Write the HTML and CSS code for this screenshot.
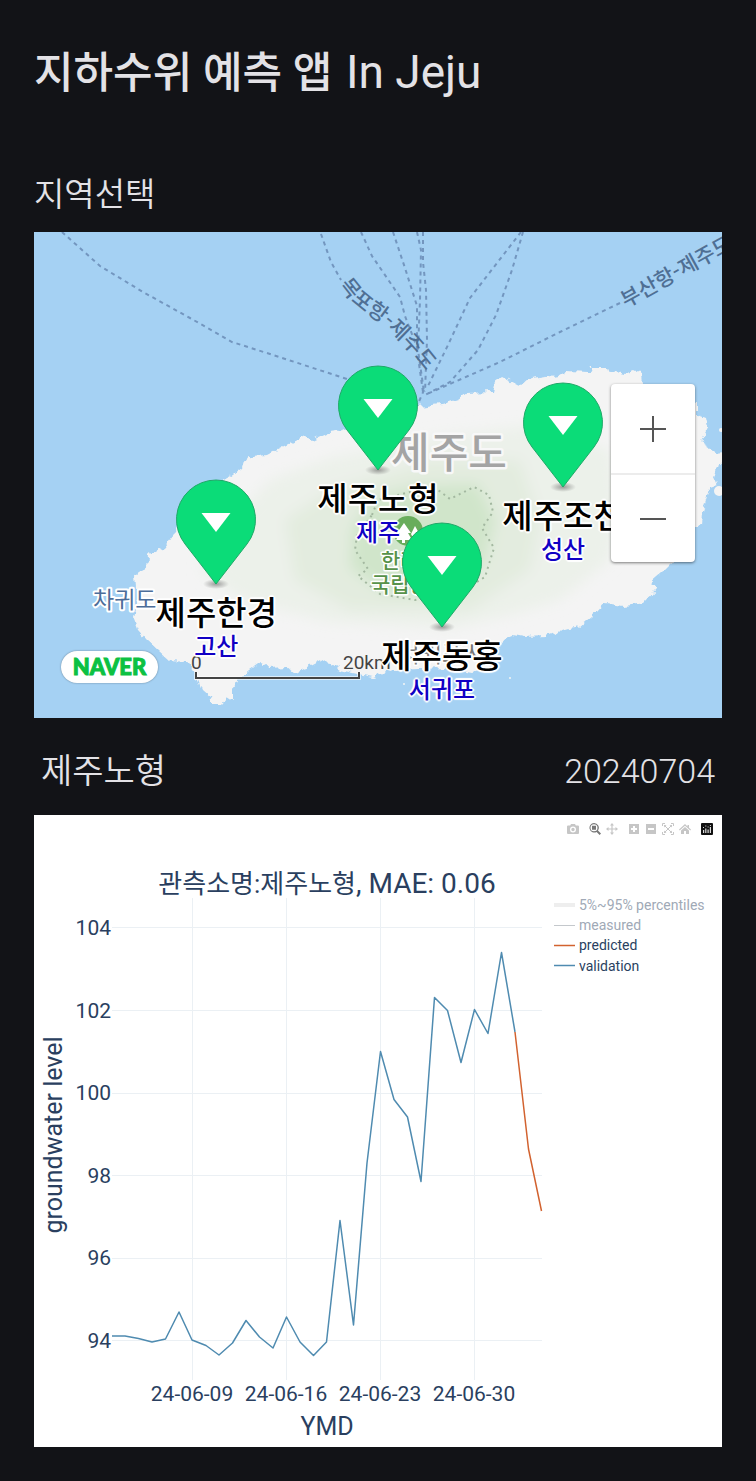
FILE: index.html
```html
<!DOCTYPE html>
<html lang="ko">
<head>
<meta charset="utf-8">
<meta name="viewport" content="width=device-width, initial-scale=1">
<title>지하수위 예측 앱 In Jeju</title>
<link rel="stylesheet" href="styles.css">
</head>
<body>
<svg class="defs" aria-hidden="true">
  <defs>
    <radialGradient id="pin-shade"><stop offset="0" stop-color="#555" stop-opacity=".55"/><stop offset="1" stop-color="#555" stop-opacity="0"/></radialGradient>
    <symbol id="pin" viewBox="-42 -41 84 116">
      <ellipse cx="0" cy="65" rx="13" ry="5" fill="url(#pin-shade)"/>
      <path d="M0 65 L-31 25 A39.500 39.500 0 1 1 31 25 Z" fill="#0bdc78" stroke="#1fa968" stroke-width="1"/>
      <path d="M-14.500 -6 H14.500 L0 13 Z" fill="#fff"/>
    </symbol>
  </defs>
</svg>
<main class="page">
  <h1 class="title"><span class="title-ko">지하수위 예측 앱 </span>In Jeju</h1>
  <h2 class="section-label">지역선택</h2>

  <section class="map" aria-label="제주도 지도">
    <svg class="map-canvas" viewBox="34 232 688 486">
      <defs>
        <filter id="coast" x="-5%" y="-5%" width="110%" height="110%">
          <feTurbulence type="fractalNoise" baseFrequency="0.13" numOctaves="2" seed="4" result="n"/>
          <feDisplacementMap in="SourceGraphic" in2="n" scale="9" xChannelSelector="R" yChannelSelector="G"/>
        </filter>
        <filter id="soft"><feGaussianBlur stdDeviation="7"/></filter>
        <path id="mokpo" d="M339 285 Q350 303 370 315 Q398 334 429 375"/>
      </defs>
      <rect x="34" y="232" width="688" height="486" fill="#a5d1f3"/>
      <path class="land" filter="url(#coast)" d="M247 455 L253 457 L267 455 L280 448 L305 436 L313 440 L330 432 L343 430 L370 417 L417 407 L427 406 L447 403 L457 400 L467 393 L493 392 L495 383 L503 377 L520 386 L527 380 L557 375 L567 372 L590 373 L593 367 L605 367 L608 370 L623 374 L635 370 L641 373 L642 383 L660 390 L697 403 L697 415 L705 418 L707 427 L700 442 L710 448 L717 453 L740 450 V462 L718 463 L714 478 L717 485 L711 487 L708 493 L702 513 L701 525 L692 528 L688 550 L672 563 L663 572 L650 583 L657 588 L643 603 L623 606 L605 603 L597 612 L587 620 L578 628 L563 630 L547 636 L523 637 L513 635 L503 639 L495 660 L490 668 L473 673 L447 668 L393 670 L373 677 L363 675 L340 670 L323 660 L310 667 L293 672 L287 667 L270 668 L260 663 L250 670 L238 680 L233 690 L233 701 L227 697 L222 703 L212 703 L210 697 L202 690 L195 673 L187 662 L170 661 L158 650 L147 640 L138 630 L133 617 L137 600 L135 575 L147 567 L148 555 L163 548 L175 533 L190 500 L230 477 L243 467 Z"/>
      <g filter="url(#soft)">
        <path fill="#ecf1ea" d="M232 520 L270 480 L330 458 L440 436 L535 425 L610 450 L618 500 L610 560 L560 600 L510 615 L450 628 L330 622 L240 600 L200 570 Z"/>
        <path fill="#e3ecdf" d="M285 520 L330 490 L430 460 L520 460 L540 520 L530 570 L470 610 L350 610 L295 580 Z"/>
        <path fill="#d0e5ca" d="M352 530 L372 498 L420 486 L478 484 L495 520 L485 560 L450 597 L385 592 L350 568 Z"/>
      </g>
      <path class="park-line" d="M372 515 L378 500 L410 492 L438 490 L450 499 L474 487 L489 495 L493 512 L482 528 L494 548 L485 577 L462 591 L415 600 L380 594 L358 576 L368 569 L355 550 L357 535 Z"/>
      <g class="isle"><circle cx="719" cy="491" r="5"/><circle cx="404" cy="684" r="1"/><circle cx="510" cy="678" r="1"/><circle cx="721" cy="430" r="2"/></g>
      <g class="routes">
        <path d="M62 232 L100 266 L143 292 L190 318 L232 342 L270 354 L350 380 L400 396"/>
        <path d="M321 234 L331 262 L341 280"/>
        <path d="M361 232 L372 256 L400 297 L405 316 L418 350 L424 392"/>
        <path d="M393 232 L405 268 L417 306 L417 350 L423 392"/>
        <path d="M417 232 L421 250 L420 300 L418 350"/>
        <path d="M423 232 L423 262 L426 290 L427 340 L425 392"/>
        <path d="M521 232 L470 298 L448 345 L427 388"/>
        <path d="M523 232 L512 270 L496 315 L478 350 L450 382 L425 395"/>
        <path d="M620 303 L560 332 L500 362 L427 394"/>
        <path d="M424 390 L417 406"/>
      </g>
      <g class="route-label">
        <text><textPath href="#mokpo">목포항-제주도</textPath></text>
        <text transform="translate(626 308) rotate(-29)">부산항-제주도</text>
      </g>
      <text class="island-label" x="391" y="468">제주도</text>
      <text class="sea-label" x="93" y="608">차귀도</text>
      <g>
        <circle cx="408" cy="531" r="15" fill="#69ad5c"/>
        <path d="M404 523 L411 533 H408 L412 540 H405 V543 H402 V540 H396 L400 533 H397 Z M415 526 L420 535 H418 L421 540 H414 L411 534 Z" fill="#fff"/>
      </g>
      <g class="park-label"><text x="381" y="568">한라산</text><text x="371" y="592">국립공원</text></g>
      <g class="town-label"><text x="442" y="662" text-anchor="middle">서귀포시</text></g>
      <g class="scale">
        <path class="scale-halo" d="M196 672 V678 H359 V672"/>
        <path d="M196 672 V678 H359 V672"/>
        <text x="191" y="669">0</text><text x="343" y="669">20km</text>
      </g>
    </svg>
    <a class="naver" href="#naver">NAVER</a>
    <button class="pin pin-nohyeong" type="button"><svg class="pin-icon"><use href="#pin"/></svg><span class="pin-name">제주노형</span><span class="pin-area">제주</span></button>
    <button class="pin pin-jocheon" type="button"><svg class="pin-icon"><use href="#pin"/></svg><span class="pin-name">제주조천</span><span class="pin-area">성산</span></button>
    <button class="pin pin-hangyeong" type="button"><svg class="pin-icon"><use href="#pin"/></svg><span class="pin-name">제주한경</span><span class="pin-area">고산</span></button>
    <button class="pin pin-donghong" type="button"><svg class="pin-icon"><use href="#pin"/></svg><span class="pin-name">제주동홍</span><span class="pin-area">서귀포</span></button>
    <div class="zoom">
      <button class="zoom-btn" type="button" aria-label="확대"><svg width="26" height="26" viewBox="0 0 26 26"><path d="M0 13 H26 M13 0 V26"/></svg></button>
      <button class="zoom-btn" type="button" aria-label="축소"><svg width="26" height="26" viewBox="0 0 26 26"><path d="M0 13 H26"/></svg></button>
    </div>
  </section>

  <div class="summary"><span>제주노형</span><time datetime="2024-07-04">20240704</time></div>

  <section class="chart" aria-label="지하수위 그래프">
    <div class="modebar">
      <div class="group">
        <button class="tool" type="button" aria-label="Download plot"><svg viewBox="0 0 12 12"><path fill-rule="evenodd" d="M1 2.500 H3.200 L4 1 H8 L8.800 2.500 H11 Q12 2.500 12 3.500 V10 Q12 11 11 11 H1 Q0 11 0 10 V3.500 Q0 2.500 1 2.500 Z M6 3.500 A3 3 0 1 0 6 9.500 A3 3 0 1 0 6 3.500 Z M6 4.800 A1.700 1.700 0 1 1 6 8.200 A1.700 1.700 0 1 1 6 4.800 Z"/></svg></button>
      </div>
      <div class="group">
        <button class="tool active" type="button" aria-label="Zoom"><svg viewBox="0 0 12 12"><path fill-rule="evenodd" d="M5 0 A4.800 4.800 0 0 1 9 7.500 L12 10.500 L10.600 12 L7.600 9 A4.800 4.800 0 1 1 5 0 Z M5 1.300 A3.500 3.500 0 1 0 5 8.300 A3.500 3.500 0 1 0 5 1.300 Z M3 2.800 H7 V6.800 H3 Z"/></svg></button>
        <button class="tool" type="button" aria-label="Pan"><svg viewBox="0 0 12 12"><path d="M6 0 L8 2.500 H6.600 V5.400 H9.500 V4 L12 6 L9.500 8 V6.600 H6.600 V9.500 H8 L6 12 L4 9.500 H5.400 V6.600 H2.500 V8 L0 6 L2.500 4 V5.400 H5.400 V2.500 H4 Z"/></svg></button>
      </div>
      <div class="group">
        <button class="tool" type="button" aria-label="Zoom in"><svg viewBox="0 0 12 12"><path fill-rule="evenodd" d="M1 1 H11 V11 H1 Z M5 3 V5 H3 V7 H5 V9 H7 V7 H9 V5 H7 V3 Z"/></svg></button>
        <button class="tool" type="button" aria-label="Zoom out"><svg viewBox="0 0 12 12"><path fill-rule="evenodd" d="M1 1 H11 V11 H1 Z M3 5 V7 H9 V5 Z"/></svg></button>
        <button class="tool" type="button" aria-label="Autoscale"><svg viewBox="0 0 12 12"><path fill="none" stroke="#c6c6c6" stroke-width="1" d="M.5 3 V.5 H3 M9 .5 H11.500 V3 M11.500 9 V11.500 H9 M3 11.500 H.5 V9 M2.500 2.500 L9.500 9.500 M9.500 2.500 L2.500 9.500"/><path d="M2 2 H4.500 L2 4.500 Z M10 2 V4.500 L7.500 2 Z M2 10 V7.500 L4.500 10 Z M10 10 H7.500 L10 7.500 Z"/></svg></button>
        <button class="tool" type="button" aria-label="Reset axes"><svg viewBox="0 0 12 12"><path d="M6 1 L8.500 3.400 V2 H10 V4.800 L12 6.600 L11.300 7.400 L6 2.800 L.7 7.400 L0 6.600 Z M6 3.900 L10 7.400 V11 H7 V8 H5 V11 H2 V7.400 Z"/></svg></button>
      </div>
      <div class="group">
        <a class="tool" href="#plotly" aria-label="Plotly"><svg viewBox="0 0 12 12"><rect width="12" height="12" rx="1" fill="#111"/><path fill="#ddd" d="M2 7 H3.200 V10 H2 Z M4.200 5.500 H5.400 V10 H4.200 Z M6.500 6.500 H7.700 V10 H6.500 Z M8.800 4 H10 V10 H8.800 Z M2 4 H3 V5 H2 Z M4.300 2.500 H5.300 V3.500 H4.300 Z M6.600 3.500 H7.600 V4.500 H6.600 Z M8.900 2 H9.900 V3 H8.900 Z"/></svg></a>
      </div>
    </div>
    <svg class="plot" viewBox="34 843 688 604">
      <path class="grid" d="M112 927.500 H542 M112 1010.500 H542 M112 1093.500 H542 M112 1175.500 H542 M112 1258.500 H542 M112 1340.500 H542 M192.500 898 V1380 M286.500 898 V1380 M380.500 898 V1380 M474.500 898 V1380"/>
      <text class="plot-title" x="327" y="893" text-anchor="middle"><tspan class="plot-title-ko">관측소명:제주노형</tspan>, MAE: 0.06</text>
      <g fill="none" stroke-width="1.500" stroke-linejoin="round">
        <path class="validation" d="M112 1336 L125 1336 L138.500 1338.500 L152 1342 L165.500 1339 L179 1312 L192 1340 L206 1345.500 L219 1355 L232.500 1343 L246 1320.500 L259.500 1337 L273 1348 L286.500 1317 L300 1342 L313.500 1355.500 L326.500 1342 L340 1220.500 L353.500 1325 L367 1163 L380.500 1051.500 L394 1099.500 L407.500 1117 L421 1181.500 L434.500 997.500 L447.500 1010.500 L461 1062.500 L474.500 1009.500 L488 1033.500 L501.500 952.500 L515 1032"/>
        <path class="predicted" d="M515 1032 L528.500 1149 L541.500 1211"/>
      </g>
      <g class="tick" text-anchor="end"><text x="111" y="935">104</text><text x="111" y="1018">102</text><text x="111" y="1100">100</text><text x="111" y="1183">98</text><text x="111" y="1265">96</text><text x="111" y="1348">94</text></g>
      <g class="tick" text-anchor="middle"><text x="192" y="1401">24-06-09</text><text x="286" y="1401">24-06-16</text><text x="380" y="1401">24-06-23</text><text x="474" y="1401">24-06-30</text></g>
      <g class="axis-title" text-anchor="middle"><text x="327" y="1435">YMD</text><text transform="translate(62 1135) rotate(-90)">groundwater level</text></g>
      <g class="legend">
        <path d="M554 905 H575" stroke="#eee" stroke-width="4"/><text class="muted" x="579" y="910">5%~95% percentiles</text>
        <path d="M554 925.500 H575" stroke="#c4c8cc" stroke-width="1"/><text class="muted" x="579" y="930">measured</text>
        <path d="M554 945.500 H575" stroke="#d2622f" stroke-width="1.500"/><text x="579" y="950">predicted</text>
        <path d="M554 965.500 H575" stroke="#4f8bb0" stroke-width="1.500"/><text x="579" y="971">validation</text>
      </g>
    </svg>
  </section>
</main>
</body>
</html>
```
FILE: styles.css
```css
* { box-sizing: border-box; }
body {
  margin: 0;
  background: #121317;
  color: #e3e2e6;
  font-family: Roboto, "Noto Sans CJK KR", sans-serif;
}
.defs { position: absolute; width: 0; height: 0; }
.page { padding: 40px 34px 34px; }
.title { margin: 0; font-size: 46px; line-height: 64px; font-weight: 400; }
.title-ko { margin-right: 3px; font-size: 43px; font-weight: 500; white-space: pre-wrap; }
.section-label { margin: 66px 0 13px; font-size: 33px; line-height: 48px; font-weight: 350; }

.map { position: relative; overflow: hidden; aspect-ratio: 688 / 486; }
.map-canvas { display: block; width: 100%; }
.land { fill: #f4f4f4; }
.isle { fill: #f4f4f4; }
.park-line { fill: none; stroke: #a3b8a0; stroke-width: 2; stroke-dasharray: 2 4; }
.routes { fill: none; stroke: #7396bf; stroke-width: 2; stroke-dasharray: 4 4; }
.map-canvas text { font-family: "Noto Sans CJK KR", sans-serif; paint-order: stroke; stroke-linejoin: round; }
.route-label { font-size: 21px; font-weight: 500; fill: #4f6f94; }
.island-label { font-size: 42px; font-weight: 500; fill: #a4a4a4; stroke: #f8f8f8; stroke-width: 5; }
.sea-label { font-size: 23px; fill: #4c6d99; stroke: #fff; stroke-width: 4; }
.park-label { font-size: 21px; font-weight: 500; fill: #56924a; stroke: #fff; stroke-width: 3; }
.town-label { font-size: 24px; fill: #777; stroke: #fff; stroke-width: 3; }
.scale path { fill: none; stroke: #444; stroke-width: 2; }
.scale .scale-halo { stroke: #fff; stroke-width: 4; opacity: .6; }
.scale text { font-family: Roboto, sans-serif; font-size: 19px; fill: #444; }

.pin {
  position: absolute;
  display: flex;
  flex-direction: column;
  align-items: center;
  width: 140px;
  margin-left: -70px;
  padding: 0;
  border: 0;
  background: none;
  font-family: "Noto Sans CJK KR", sans-serif;
  font-weight: 500;
  line-height: 34px;
  white-space: nowrap;
  text-shadow: 2px 0 1px #fff, -2px 0 1px #fff, 0 2px 1px #fff, 0 -2px 1px #fff, 1px 1px 1px #fff, -1px -1px 1px #fff, 1px -1px 1px #fff, -1px 1px 1px #fff;
}
.pin-icon { display: block; width: 84px; height: 116px; }
.pin-name { font-size: 33px; color: #000; }
.pin-area { font-size: 24px; color: #1100c4; }
.pin-nohyeong { left: 50%; top: 27.2%; }
.pin-jocheon { left: 76.9%; top: 30.7%; }
.pin-hangyeong { left: 26.5%; top: 50.6%; }
.pin-donghong { left: 59.3%; top: 59.5%; }

.naver {
  position: absolute;
  left: 27px;
  bottom: 35px;
  width: 97px;
  border-radius: 16px;
  background: #fff;
  box-shadow: 0 0 2px rgba(0, 0, 0, .4);
  color: #0cc142;
  font: 900 22px/32px Lato, sans-serif;
  -webkit-text-stroke: 1px #0cc142;
  text-align: center;
  text-decoration: none;
}
.zoom {
  position: absolute;
  right: 27px;
  top: 152px;
  width: 84px;
  border-radius: 4px;
  background: #fff;
  box-shadow: 0 1px 3px rgba(0, 0, 0, .5);
}
.zoom-btn { display: flex; align-items: center; justify-content: center; width: 100%; height: 89px; padding: 0; border: 0; background: none; }
.zoom-btn + .zoom-btn { border-top: 2px solid #ececec; }
.zoom-btn path { stroke: #555; stroke-width: 2; }

.summary { display: flex; justify-content: space-between; padding: 29px 7px 20px; font-size: 34px; line-height: 48px; font-weight: 350; }

.chart { background: #fff; color: #2a3f5f; }
.modebar { display: flex; justify-content: flex-end; gap: 5px; height: 28px; padding-right: 7px; }
.group { display: flex; }
.tool { display: flex; align-items: center; justify-content: center; width: 17px; height: 28px; padding: 0; border: 0; background: none; }
.tool svg { width: 12px; height: 12px; fill: #c6c6c6; }
.tool.active svg { fill: #777; }
.plot { display: block; width: 100%; fill: #2a3f5f; }
.grid { stroke: #ebf0f4; stroke-width: 1; }
.validation { stroke: #4f8bb0; }
.predicted { stroke: #d2622f; }
.plot-title { font-size: 28px; }
.plot-title-ko { font-size: 26px; }
.tick { font-size: 21px; }
.axis-title { font-size: 25px; }
.legend { font-size: 14px; }
.muted { fill: #a0a9b6; }
```
